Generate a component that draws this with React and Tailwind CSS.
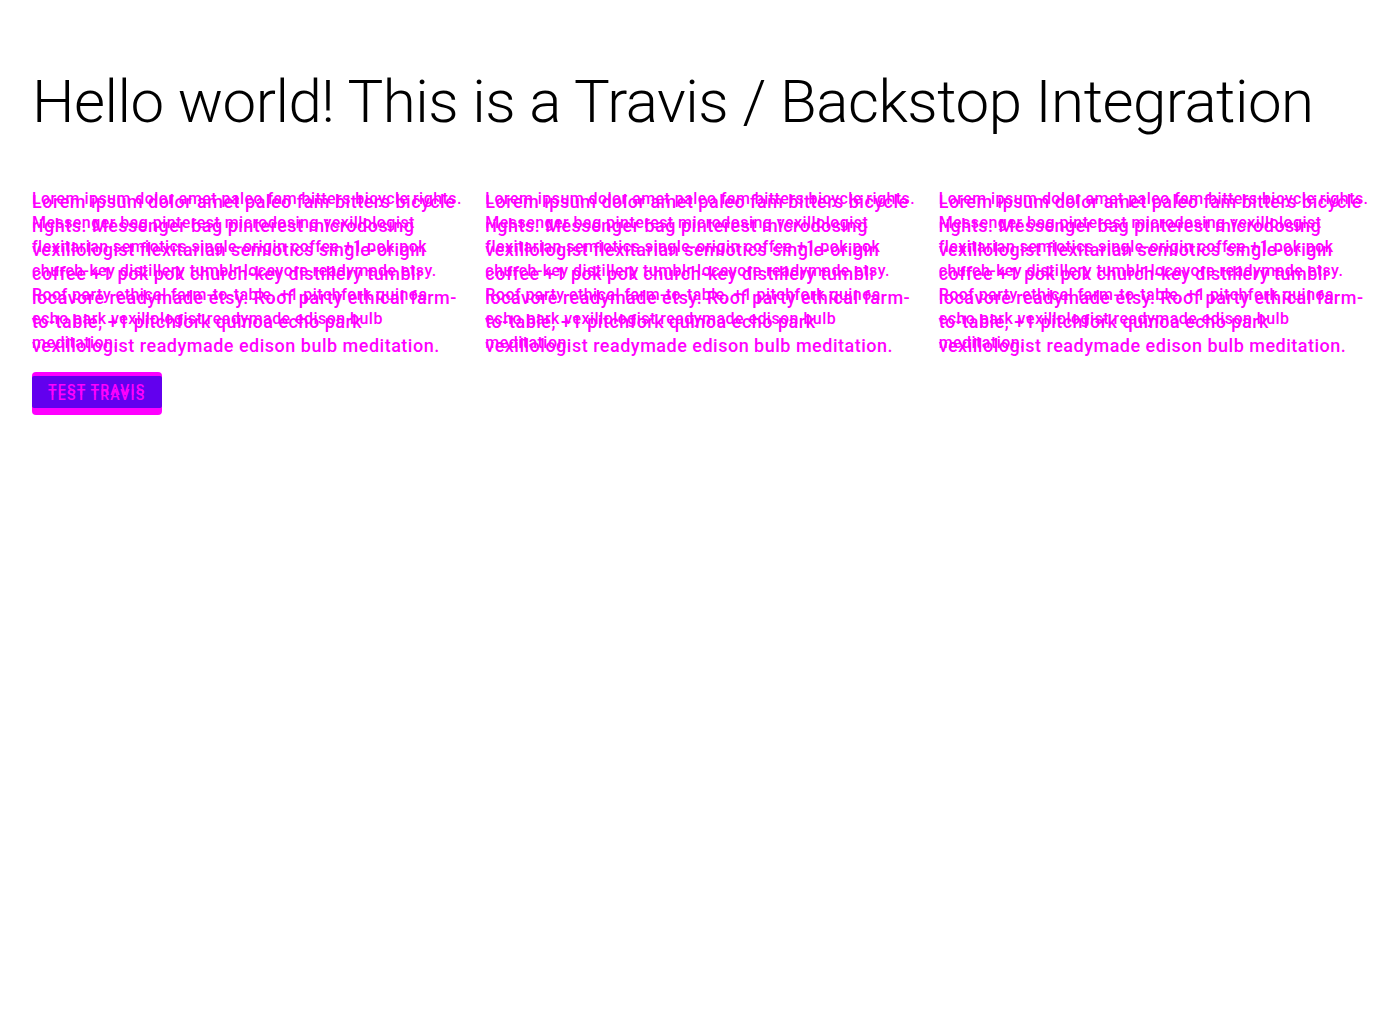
const copy =
  'Lorem ipsum dolor amet paleo fam bitters bicycle rights. Messenger bag pinterest microdosing vexillologist flexitarian semiotics single-origin coffee +1 pok pok church-key distillery tumblr locavore readymade etsy. Roof party ethical farm-to-table, +1 pitchfork quinoa echo park vexillologist readymade edison bulb meditation.';

function Column() {
  return (
    <div className="grid">
      <p className="[grid-area:1/1] pt-[3px] text-[18px] leading-6 tracking-[0.5px] font-medium text-[#ff00ff]">{copy}</p>
      <p className="[grid-area:1/1] mr-[-1px] text-[16px] leading-6 tracking-[0.45px] font-medium text-[#ff00ff]">{copy}</p>
    </div>
  );
}

export default function App() {
  return (
    <div className="min-h-screen bg-white font-['Roboto',sans-serif]">
      <div className="p-5">
        <h1 className="px-3 pt-[46px] pb-[49px] text-[60px] leading-[72px] font-light tracking-[-0.48px] text-black">
          Hello world! This is a Travis / Backstop Integration
        </h1>
        <div className="grid grid-cols-3 gap-6 px-3">
          <Column />
          <Column />
          <Column />
        </div>
        <div className="px-3 pt-[14px]">
          <div className="grid w-[130px] h-[43px] rounded-[4px] bg-[#ff00ff] pt-[4px] pb-[7px]">
            <div className="[grid-area:1/1] bg-[#6200ee] rounded-[2px]" />
            <span className="[grid-area:1/1] px-4 pt-[2px] text-[14px] leading-6 font-medium tracking-[1.25px] text-[#ff00ff]">
              TEST TRAVIS
            </span>
            <span className="[grid-area:1/1] px-4 pt-[7px] text-[14px] leading-6 font-medium tracking-[1.25px] text-[#ff00ff]">
              TEST TRAVIS
            </span>
          </div>
        </div>
      </div>
    </div>
  );
}
